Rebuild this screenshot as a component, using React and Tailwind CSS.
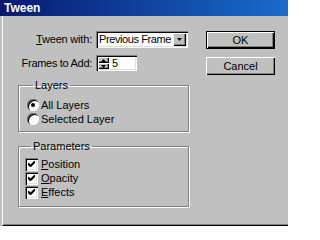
import { useState } from 'react'

const sunken =
  'shadow-[inset_1px_1px_0_#808080,inset_2px_2px_0_#000,inset_-1px_-1px_0_#fff,inset_-2px_-2px_0_#dfdfdf]'
const raised =
  'shadow-[inset_1px_1px_0_#fff,inset_-1px_-1px_0_#000,inset_-2px_-2px_0_#808080]'

function Check({ label, checked, onToggle }) {
  return (
    <label className="flex items-center h-[14px] cursor-default" onClick={onToggle}>
      <span className={`w-[13px] h-[13px] bg-white flex items-center justify-center ${sunken}`}>
        {checked && (
          <svg width="7" height="7" viewBox="0 0 7 7">
            <path d="M0 2 L0 4 L2 6 L3 6 L7 2 L7 0 L6 0 L2.5 3.5 L1 2 Z" fill="#000" />
          </svg>
        )}
      </span>
      <span className="ml-[3px]">
        <span className="underline">{label[0]}</span>
        {label.slice(1)}
      </span>
    </label>
  )
}

function Radio({ label, checked, onPick }) {
  return (
    <label className="flex items-center h-[14px] cursor-default" onClick={onPick}>
      <span className="w-[12px] h-[12px] rounded-full bg-white flex items-center justify-center shadow-[inset_1px_1px_0_#808080,inset_2px_2px_0_#000,inset_-1px_-1px_0_#fff]">
        {checked && <span className="w-[4px] h-[4px] rounded-full bg-black" />}
      </span>
      <span className="ml-[2px]">{label}</span>
    </label>
  )
}

export default function App() {
  const [layer, setLayer] = useState('all')
  const [params, setParams] = useState({ Position: true, Opacity: true, Effects: true })

  return (
    <div
      className="w-[288px] h-[226px] bg-[#c0c0c0] text-black text-[11px] leading-[11px] flex flex-col overflow-hidden"
      style={{ fontFamily: '"Liberation Sans", Arial, sans-serif' }}
    >
      {/* title bar */}
      <div className="h-[16px] shrink-0 bg-gradient-to-r from-[#0a1870] to-[#1a6ccc] flex items-center px-[4px]">
        <span className="text-white font-bold text-[12px]">Tween</span>
      </div>

      <div className="flex-1 ml-[2px] border-l border-white border-b border-b-black shadow-[inset_0_-1px_0_#808080] flex">
        {/* left column */}
        <div className="w-[171px] ml-[15px] flex flex-col">
          <div className="mt-[15px] h-[17px] flex items-center">
            <span className="w-[74px] flex justify-end whitespace-nowrap tracking-[-0.2px]">
              <span><span className="underline">T</span>ween with:</span>
            </span>
            <div className={`ml-[4px] w-[92px] h-[17px] bg-white flex items-center pl-[3px] pr-[2px] ${sunken}`}>
              <span className="flex-1 whitespace-nowrap tracking-[-0.4px]">Previous Frame</span>
              <span className={`w-[13px] h-[13px] shrink-0 bg-[#c0c0c0] flex items-center justify-center ${raised}`}>
                <svg width="5" height="3" viewBox="0 0 5 3">
                  <path d="M0 0 H5 L2.5 3 Z" fill="#000" />
                </svg>
              </span>
            </div>
          </div>

          <div className="mt-[7px] h-[16px] flex items-center">
            <span className="w-[74px] flex justify-end whitespace-nowrap tracking-[-0.3px]">
              <span>Frames to Add:</span>
            </span>
            <div className={`ml-[4px] w-[41px] h-[16px] bg-white flex items-center pl-[2px] ${sunken}`}>
              <div className="flex flex-col w-[11px] h-[12px]">
                <span className={`h-[6px] bg-[#c0c0c0] flex items-center justify-center ${raised}`}>
                  <svg width="5" height="3" viewBox="0 0 5 3">
                    <path d="M0 3 H5 L2.5 0 Z" fill="#000" />
                  </svg>
                </span>
                <span className={`h-[6px] bg-[#c0c0c0] flex items-center justify-center ${raised}`}>
                  <svg width="5" height="3" viewBox="0 0 5 3">
                    <path d="M0 0 H5 L2.5 3 Z" fill="#000" />
                  </svg>
                </span>
              </div>
              <span className="ml-[3px]">5</span>
            </div>
          </div>

          {/* Layers */}
          <fieldset className="mt-[9px] h-[52px] border border-[#808080] shadow-[inset_1px_1px_0_#fff,1px_1px_0_#fff] px-[8px]">
            <legend className="ml-[6px] px-[2px] leading-[11px]">Layers</legend>
            <div className="mt-[7px] flex flex-col">
              <Radio label="All Layers" checked={layer === 'all'} onPick={() => setLayer('all')} />
              <Radio label="Selected Layer" checked={layer === 'sel'} onPick={() => setLayer('sel')} />
            </div>
          </fieldset>

          {/* Parameters */}
          <fieldset className="mt-[9px] h-[66px] border border-[#808080] shadow-[inset_1px_1px_0_#fff,1px_1px_0_#fff] px-[6px]">
            <legend className="ml-[6px] px-[2px] leading-[11px]">Parameters</legend>
            <div className="mt-[5px] flex flex-col">
              {Object.keys(params).map(k => (
                <Check
                  key={k}
                  label={k}
                  checked={params[k]}
                  onToggle={() => setParams(p => ({ ...p, [k]: !p[k] }))}
                />
              ))}
            </div>
          </fieldset>
        </div>

        {/* buttons */}
        <div className="ml-[17px] mt-[15px] flex flex-col gap-[8px]">
          <button className="w-[69px] h-[18px] border border-black bg-[#c0c0c0] shadow-[inset_1px_1px_0_#fff,inset_-1px_-1px_0_#000,inset_-2px_-2px_0_#808080]">
            OK
          </button>
          <button className={`w-[69px] h-[18px] bg-[#c0c0c0] ${raised}`}>Cancel</button>
        </div>
      </div>
    </div>
  )
}
